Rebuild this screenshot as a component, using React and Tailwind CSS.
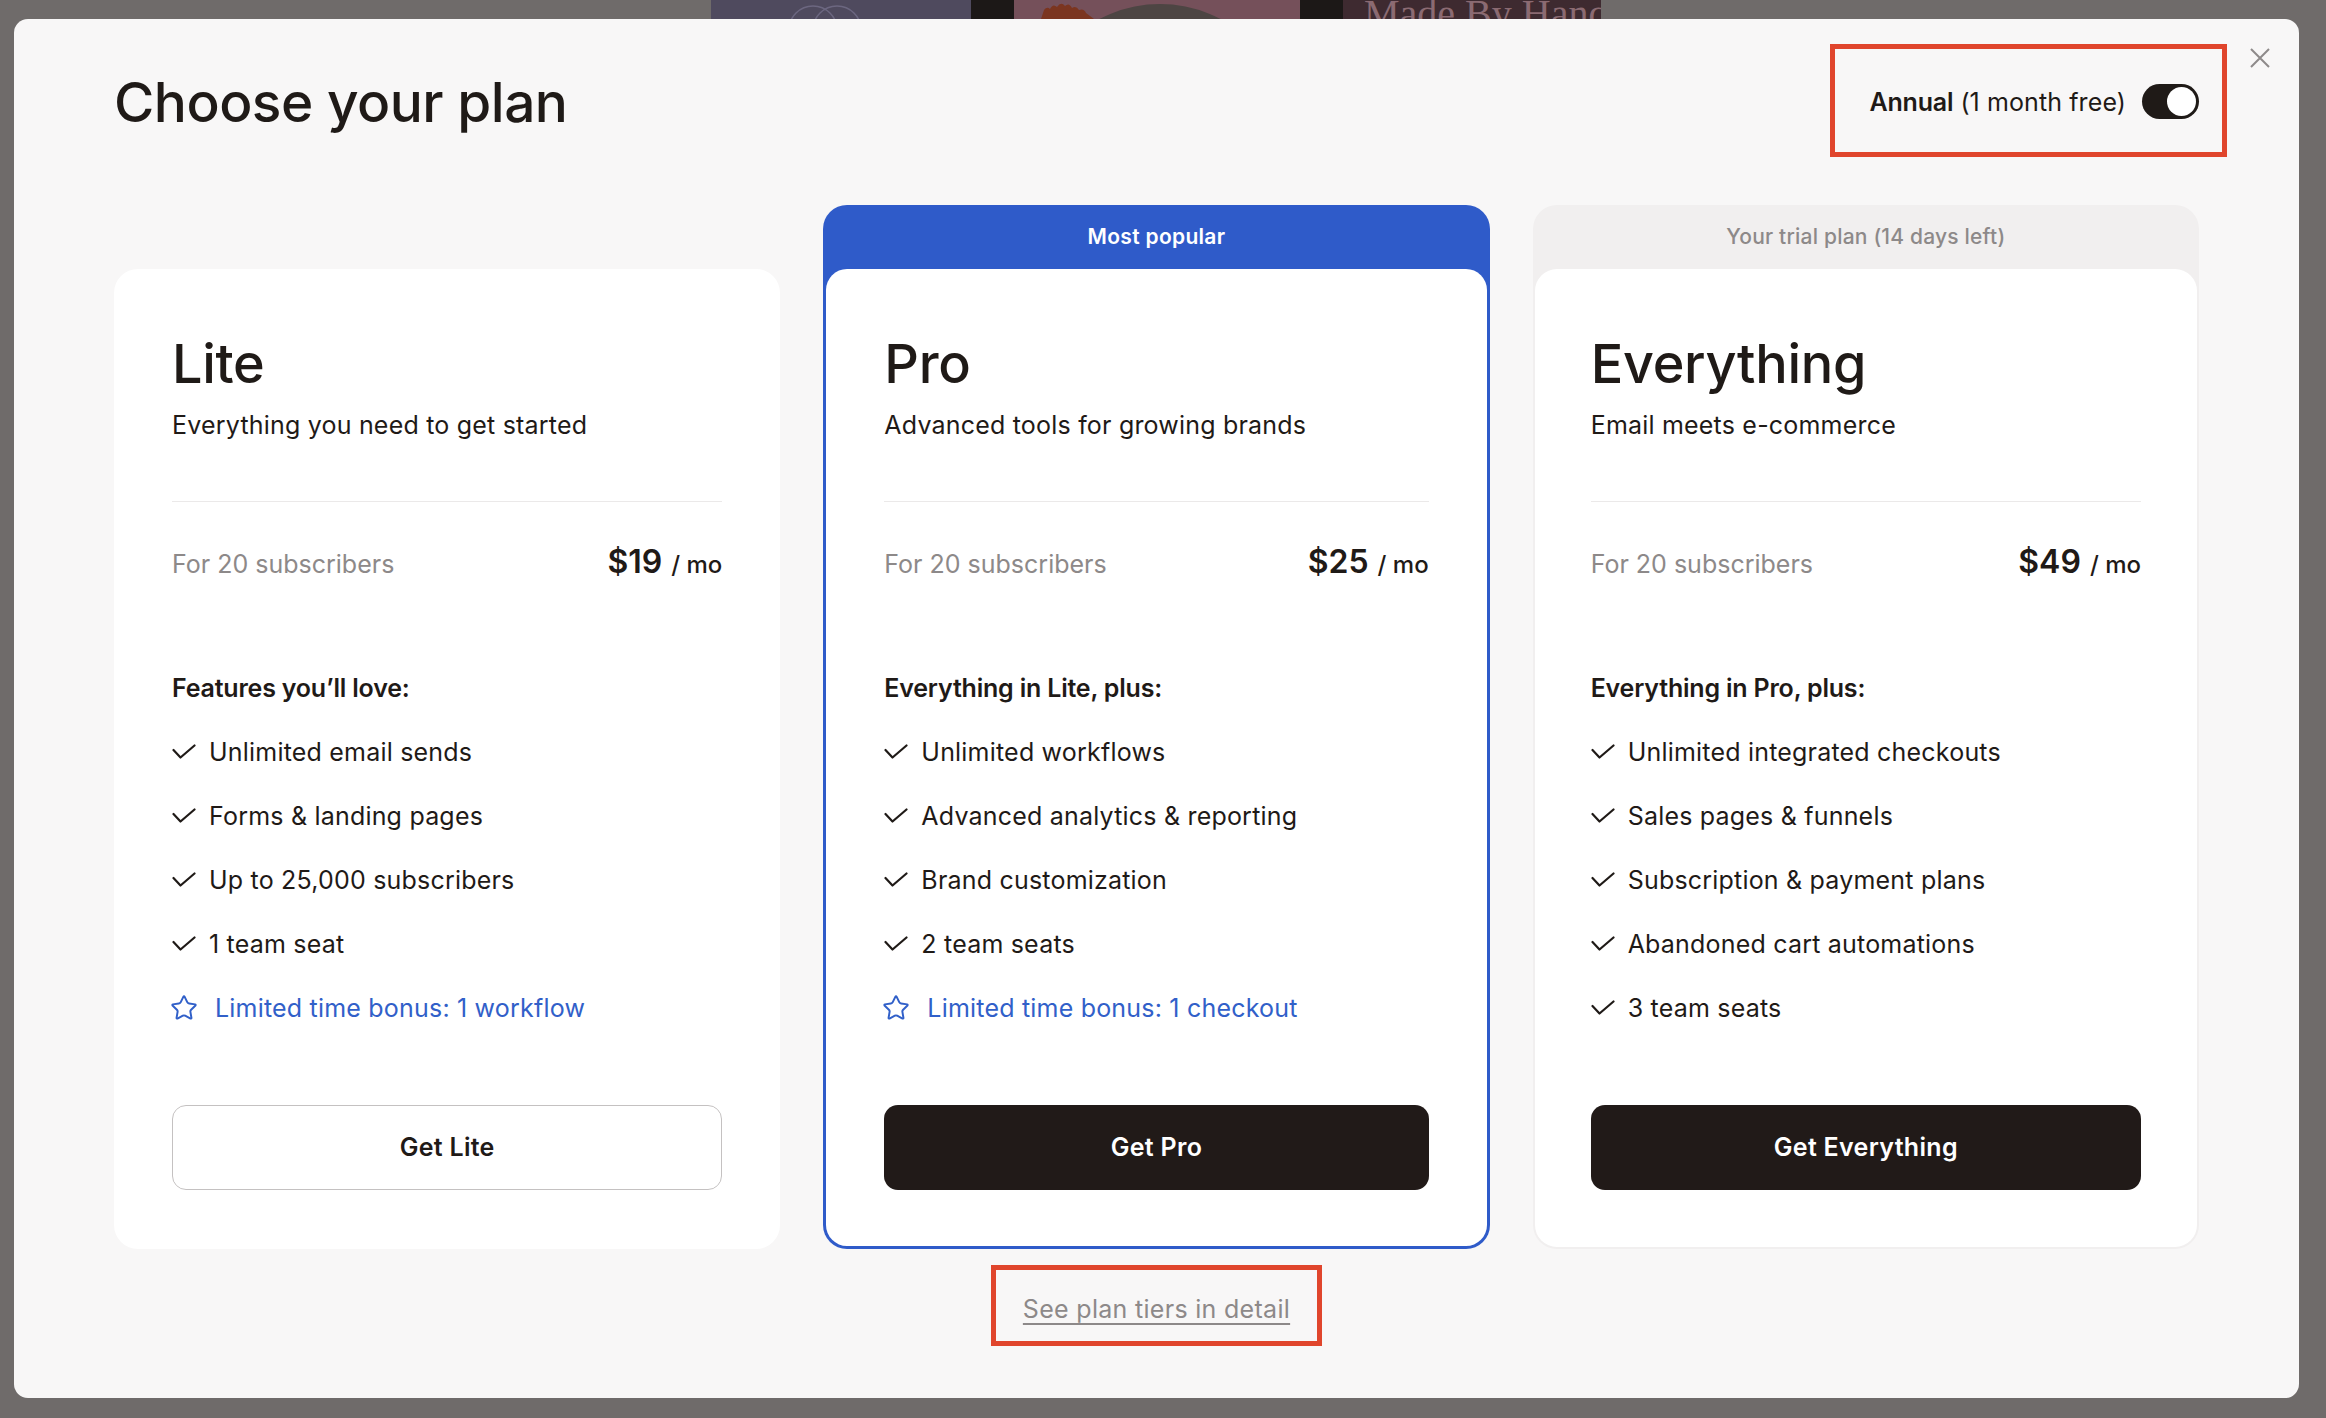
import React from "react";
import { Star } from "lucide-react";

function Check() {
  return (
    <svg width="24" height="16" viewBox="0 0 24 16" fill="none" className="shrink-0">
      <path d="M1.5 6 L8.5 13.5 L22.5 1.5" stroke="#1f1a17" strokeWidth="2.2" strokeLinecap="round" strokeLinejoin="round" />
    </svg>
  );
}

const plans = [
  {
    key: "lite",
    title: "Lite",
    subtitle: "Everything you need to get started",
    price: "$19",
    featuresTitle: "Features you\u2019ll love:",
    features: ["Unlimited email sends", "Forms & landing pages", "Up to 25,000 subscribers", "1 team seat"],
    bonus: "Limited time bonus: 1 workflow",
    button: "Get Lite",
  },
  {
    key: "pro",
    title: "Pro",
    subtitle: "Advanced tools for growing brands",
    price: "$25",
    featuresTitle: "Everything in Lite, plus:",
    features: ["Unlimited workflows", "Advanced analytics & reporting", "Brand customization", "2 team seats"],
    bonus: "Limited time bonus: 1 checkout",
    button: "Get Pro",
  },
  {
    key: "everything",
    title: "Everything",
    subtitle: "Email meets e-commerce",
    price: "$49",
    featuresTitle: "Everything in Pro, plus:",
    features: [
      "Unlimited integrated checkouts",
      "Sales pages & funnels",
      "Subscription & payment plans",
      "Abandoned cart automations",
      "3 team seats",
    ],
    bonus: null,
    button: "Get Everything",
  },
];

function CardBody({ plan, padClass }) {
  const dark = plan.key !== "lite";
  return (
    <div className={"bg-white flex-1 flex flex-col " + padClass}>
      <div className="text-[54px] leading-[54px] font-medium tracking-[-0.3px]">{plan.title}</div>
      <div className="mt-[18px] text-[25px] leading-[32px] tracking-[0.2px]">{plan.subtitle}</div>
      <div className="mt-[60px] h-px bg-[#ebe9e9]" />
      <div className="mt-[40px] flex items-baseline justify-between h-[40px]">
        <span className="text-[25px] leading-[32px] text-[#8d8989]">For 20 subscribers</span>
        <span className="flex items-baseline">
          <span className="text-[32px] leading-[40px] font-semibold">{plan.price}</span>
          <span className="ml-[9px] text-[24px] leading-[32px] font-medium">/ mo</span>
        </span>
      </div>
      <div className="mt-[90px] flex flex-col gap-[32px]">
        <div className="text-[25px] leading-[32px] font-semibold tracking-[-0.2px]">{plan.featuresTitle}</div>
        {plan.features.map((f) => (
          <div key={f} className="flex items-center h-[32px]">
            <Check />
            <span className="ml-[13px] text-[25px] leading-[32px] tracking-[0.2px]">{f}</span>
          </div>
        ))}
        {plan.bonus && (
          <div className="flex items-center h-[32px] text-[#3160c9]">
            <Star size={28} strokeWidth={1.7} className="-ml-[2px] shrink-0" />
            <span className="ml-[17px] text-[25px] leading-[32px] tracking-[0.2px]">{plan.bonus}</span>
          </div>
        )}
      </div>
      <button
        className={
          "mt-[81px] h-[85px] w-full rounded-[14px] text-[25px] tracking-[0.3px] font-semibold flex items-center justify-center " +
          (dark ? "bg-[#211a18] text-white" : "bg-white border border-[#c4c1c1] text-[#1f1a17]")
        }
      >
        {plan.button}
      </button>
    </div>
  );
}

function TopStrip() {
  return (
    <div className="h-[19px] flex overflow-hidden shrink-0">
      <div className="w-[711px] shrink-0" />
      <div className="w-[260px] shrink-0 bg-[#4f4a5e] flex">
        <svg width="70" height="19" viewBox="0 0 70 19" className="ml-[80px]" fill="none">
          <circle cx="22" cy="30" r="24" stroke="#6c6780" strokeWidth="1.5" />
          <circle cx="46" cy="30" r="24" stroke="#6c6780" strokeWidth="1.5" />
        </svg>
      </div>
      <div className="w-[43px] shrink-0 bg-[#1c1817]" />
      <div className="w-[286px] shrink-0 bg-[#75505a]">
        <svg width="286" height="19" viewBox="0 0 286 19">
          <circle cx="146" cy="134" r="130" fill="#4d4543" />
          <path d="M27 19 L30 10 Q33 6 36 9 Q39 3 43 7 Q47 1 51 6 Q55 2 58 8 Q62 5 65 10 Q70 8 72 13 L80 19 Z" fill="#7b3520" />
        </svg>
      </div>
      <div className="w-[43px] shrink-0 bg-[#1c1817]" />
      <div className="w-[258px] shrink-0 bg-[#3e2a30] overflow-hidden">
        <div className="ml-[21px] -mt-[6px] whitespace-nowrap text-[40px] leading-none text-[#8b6a72] [font-family:'Liberation_Serif',serif]">
          Made By Hand
        </div>
      </div>
    </div>
  );
}

export default function App() {
  const [lite, pro, everything] = plans;
  return (
    <div className="w-[2326px] h-[1418px] bg-[#6f6b6a] overflow-hidden flex flex-col text-[#1f1a17] [font-family:Inter,sans-serif]">
      <TopStrip />
      <div className="ml-[14px] w-[2285px] h-[1379px] bg-[#f8f7f7] rounded-[14px] relative px-[100px] flex flex-col">
        <svg width="20" height="20" viewBox="0 0 20 20" className="absolute top-[29px] right-[29px]" fill="none">
          <path d="M1 1 L19 19 M19 1 L1 19" stroke="#8e8a8a" strokeWidth="2" />
        </svg>

        <div className="flex justify-between items-start">
          <h1 className="mt-[56px] text-[55px] leading-[55px] font-medium tracking-[-0.5px]">Choose your plan</h1>
          <div className="mt-[25px] -mr-[28px] border-[5px] border-[#e0452c] pl-[34px] pr-[23px] pt-[35px] pb-[33px]">
            <div className="flex items-center gap-[16px] h-[35px]">
              <span className="text-[25px] leading-[32px] tracking-[0.1px]">
                <span className="font-semibold tracking-[-0.2px]">Annual</span> (1 month free)
              </span>
              <div className="w-[57px] h-[35px] rounded-full bg-[#1f1a17] p-[3px] flex justify-end">
                <div className="w-[29px] h-[29px] rounded-full bg-white" />
              </div>
            </div>
          </div>
        </div>

        <div className="mt-[48px] grid grid-cols-3 gap-[43px]">
          <div className="flex flex-col">
            <div className="h-[64px]" />
            <div className="flex-1 flex flex-col rounded-[24px] overflow-hidden">
              <CardBody plan={lite} padClass="px-[58px] pt-[68px] pb-[59px]" />
            </div>
          </div>

          <div className="flex flex-col rounded-[24px] bg-[#2f5bc9] px-[3px] pb-[3px]">
            <div className="h-[64px] flex items-center justify-center text-white text-[21px] tracking-[0.3px] font-semibold">
              Most popular
            </div>
            <div className="flex-1 flex flex-col rounded-[21px] overflow-hidden">
              <CardBody plan={pro} padClass="px-[58px] pt-[68px] pb-[56px]" />
            </div>
          </div>

          <div className="flex flex-col rounded-[24px] bg-[#f1efef] px-[2px] pb-[2px]">
            <div className="h-[64px] flex items-center justify-center text-[#8d8989] text-[21px] tracking-[0.2px] font-medium">
              Your trial plan (14 days left)
            </div>
            <div className="flex-1 flex flex-col rounded-[22px] overflow-hidden">
              <CardBody plan={everything} padClass="px-[56px] pt-[68px] pb-[57px]" />
            </div>
          </div>
        </div>

        <div className="mt-[16px] flex justify-center">
          <div className="border-[5px] border-[#e0452c] px-[27px] pt-[23px] pb-[16px]">
            <a className="block text-[25px] leading-[32px] tracking-[0.3px] text-[#8d8989] underline decoration-2 underline-offset-[5px]">
              See plan tiers in detail
            </a>
          </div>
        </div>
      </div>
    </div>
  );
}
